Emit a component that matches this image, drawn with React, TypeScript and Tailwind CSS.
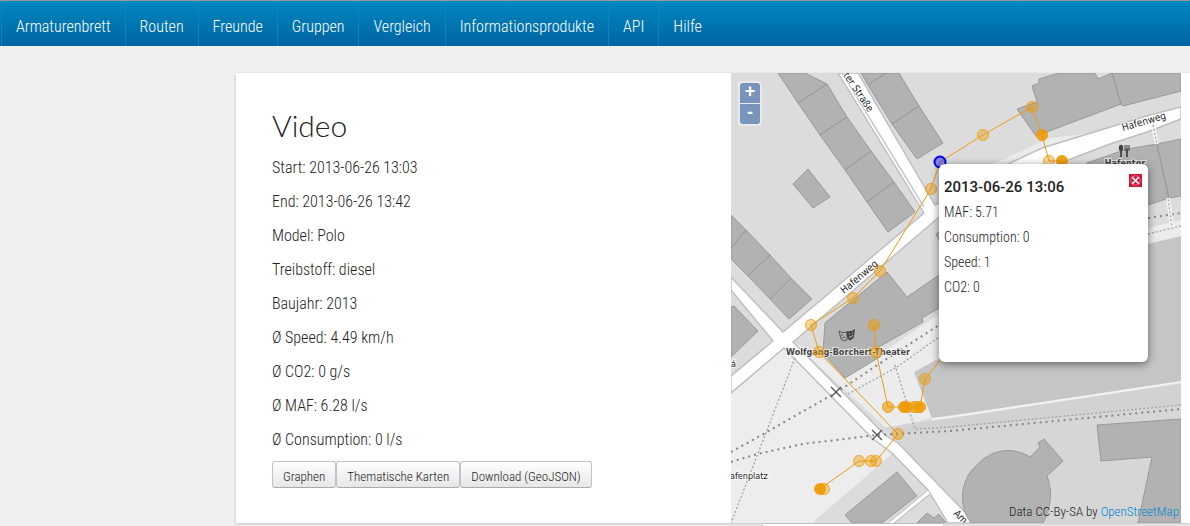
const navItems = [
  "Armaturenbrett",
  "Routen",
  "Freunde",
  "Gruppen",
  "Vergleich",
  "Informationsprodukte",
  "API",
  "Hilfe",
];

const facts = [
  "Start: 2013-06-26 13:03",
  "End: 2013-06-26 13:42",
  "Model: Polo",
  "Treibstoff: diesel",
  "Baujahr: 2013",
  "Ø Speed: 4.49 km/h",
  "Ø CO2: 0 g/s",
  "Ø MAF: 6.28 l/s",
  "Ø Consumption: 0 l/s",
];

const actions = ["Graphen", "Thematische Karten", "Download (GeoJSON)"];

const measurements = ["MAF: 5.71", "Consumption: 0", "Speed: 1", "CO2: 0"];

const trackPoints: [number, number, number][] = [
  [824, 489, 0.4], [820, 489, 0.9], [859, 461, 0.4], [871, 461, 0.4], [876, 461, 0.4],
  [898, 434, 0.4], [819, 352, 0.4], [811, 325, 0.4], [853, 298, 0.4], [880, 271, 0.4],
  [931, 189, 0.4], [983, 135, 0.4], [1032, 107, 0.4], [1042, 135, 0.85], [1049, 161, 0.4],
  [1062, 161, 0.9], [874, 325, 0.5], [876, 352, 0.4], [888, 407, 0.6], [904, 407, 0.9],
  [907, 407, 0.7], [914, 407, 0.5], [917, 407, 0.4], [920, 407, 0.8], [925, 379, 0.4],
];

const buildings = [
  "778,73 805,73 827,84 847,117 871,151 894,182 915,212 888,232 867,202 845,170 820,135 798,103",
  "861,73 868,85 892,124 917,159 943,143 919,106 899,73",
  "793,184 808,169 830,197 813,208",
  "731,215 746,230 770,255 791,278 812,299 789,319 770,299 748,276 731,259",
  "731,307 734,306 758,331 731,357",
  "1017,109 1037,102 1032,86 1039,83 1039,79 1059,73 1095,73 1098,79 1112,73 1181,73 1181,91 1123,106 1121,104 1036,136",
  "1181,139 1157,144 1127,149 1087,163 1087,220 1148,205 1169,198 1181,196",
  "887,272 907,297 939,275 960,262 960,296 922,318 923,322 877,348 883,355 845,378 823,353 825,323",
  "936,234 950,225 950,244 940,242",
  "845,515 897,472 917,496 882,523 852,523",
  "917,523 927,513 934,518 939,514 946,523",
  "1097,425 1181,419 1181,523 1138,523 1152,457 1101,461",
];

function CityMap() {
  return (
    <svg
      viewBox="731 73 450 450"
      className="block w-full font-['DejaVu_Sans_Condensed','DejaVu_Sans',sans-serif] font-normal"
      role="img"
      aria-label="Karte"
    >
      <rect x="731" y="73" width="450" height="450" fill="#dcdcdc" />
      {/* open ground, quay and harbour basin */}
      <path d="M731 393L785 345L893 453L812 523H731Z" fill="#ededed" />
      <path d="M793 342L826 360L845 378L960 300L1148 228L1181 220V236L914 372L932 418L886 428Z" fill="#ececec" />
      <path d="M885 428L1181 384V523H975Z" fill="#d6d6d6" />
      <path d="M885 428L1181 384V404L900 434Z" fill="#d2d2d2" />
      <path d="M914 372L940 358L1148 244L1181 236V382L932 418Z" fill="#c5c5c5" />
      <path d="M932 419L950 417L1181 382" fill="none" stroke="#f3f3f3" strokeWidth="2" />
      <path d="M993 164L1050 138L1110 131L1117 126L1042 150L1010 164Z" fill="#ebebeb" />

      {/* roads */}
      <path
        d="M838 73L924 213L783 332L731 277V290L773 341L731 376V393L784 348L872 438L892 453L928 490L948 523H975L960 507L898 443L885 435L793 342L939 217L1058 164L1107 145L1147 132L1181 119V107L1150 115L1117 125L1042 148L1008 164L935 205L858 73Z"
        fill="#fff"
        stroke="#bdbdbd"
        strokeWidth="1.4"
      />
      <path d="M842 73L924 207" stroke="#c9c9c9" strokeWidth="1.5" />
      <path d="M890 524L928 493" stroke="#bdbdbd" strokeWidth="5" />
      <path d="M890 524L929 492" stroke="#fff" strokeWidth="3" />

      <g fill="#b2b2b2" stroke="#999" strokeWidth="1">
        {buildings.map((points) => (
          <polygon key={points} points={points} />
        ))}
        <path d="M1030 457L1040 447L1038 443L1044 439L1063 461L1047 476C1053 491 1051 508 1043 523H971C958 506 960 480 976 466C991 449 1012 446 1030 457Z" />
      </g>
      <path
        d="M798 103L827 84M820 135L847 117M845 170L871 151M867 202L894 182M868 85L886 73M892 124L919 106M746 230L731 248M770 255L748 276M791 278L770 299M1112 73L1121 104M1157 144L1169 198"
        stroke="#929292"
        fill="none"
      />

      {/* railway and foot paths */}
      <path
        d="M731 452L767 432L837 392L885 360L939 325M731 462L757 454L803 444L877 435L950 431L1181 409M1148 218L1181 213"
        fill="none"
        stroke="#858585"
        strokeWidth="2"
        strokeDasharray="2 4"
      />
      <path
        d="M795 358L731 523M848 394L897 367L939 337M895 365L915 429L950 427L1181 405M1148 234L1181 226"
        fill="none"
        stroke="#a2a2a2"
        strokeWidth="1.3"
        strokeDasharray="2 2"
      />
      <path d="M1153 125L1157 144M1168 198L1172 227" fill="none" stroke="#f4f4f4" strokeWidth="4" />
      <path
        d="M1153 125L1157 144L1168 198L1172 227"
        fill="none"
        stroke="#a2a2a2"
        strokeWidth="1.3"
        strokeDasharray="2 2"
      />
      <path d="M831 387L841 397M841 387L831 397M872 430L882 440M882 430L872 440" stroke="#555" strokeWidth="1.4" />

      {/* labels */}
      <g fill="#1c1c1c" stroke="#fff" strokeWidth="2" strokeOpacity="0.7" paintOrder="stroke" fontSize="10">
        <text transform="translate(844 294) rotate(-40)">Hafenweg</text>
        <text transform="translate(1123 131) rotate(-16)">Hafenweg</text>
        <text transform="translate(843 75) rotate(56)">ter Straße</text>
        <text transform="translate(953 514) rotate(45)">Am</text>
        <text x="730" y="479" fontSize="9">afenplatz</text>
        <text x="731" y="367" fontSize="9">á</text>
        <text x="848" y="355" fontSize="9" textAnchor="middle" fontWeight="bold" fill="#444">
          Wolfgang-Borchert-Theater
        </text>
        <text x="1125" y="166" fontSize="9" textAnchor="middle" fontWeight="bold" fill="#444">
          Hafentor
        </text>
      </g>

      {/* theatre masks */}
      <path d="M839 331Q843 334 847 332L847 340Q843 342 841 339Z" fill="none" stroke="#555" />
      <path d="M841 335H843M842 338L845 337" stroke="#555" />
      <path d="M847 331Q851 332 855 329L854 337Q852 341 849 340Q846 337 847 331Z" fill="#444" />
      <path d="M849 334H850M852 333H853M849 337Q852 338 853 335" stroke="#ddd" fill="none" strokeWidth="0.8" />
      {/* spoon and fork */}
      <ellipse cx="1121" cy="148" rx="2.2" ry="3.2" fill="#444" />
      <path d="M1121 150V157M1127 150V157" stroke="#444" strokeWidth="1.8" />
      <path d="M1125 145V150H1129V145M1127 145V150" stroke="#444" fill="none" strokeWidth="1.1" />

      {/* recorded track */}
      <path
        d="M820 489L859 461H876L898 434L819 352L811 325L853 298L880 271L931 189L940 162L983 135L1032 107L1042 135L1049 161H1062M874 325L876 352L888 407H920L925 379L946 353"
        fill="none"
        stroke="#eb9b17"
      />
      {trackPoints.map(([x, y, opacity], i) => (
        <circle key={i} cx={x} cy={y} r="5.5" fill="#ee9900" fillOpacity={opacity} stroke="#ee9900" strokeOpacity="0.8" />
      ))}
      <circle cx="940" cy="162" r="5.5" fill="#0000ff" fillOpacity="0.4" stroke="#0000ee" strokeWidth="2" />
    </svg>
  );
}

export default function App() {
  return (
    <div className="min-h-screen overflow-hidden bg-[#f0f0f0] font-['Roboto_Condensed',Roboto,sans-serif] font-light text-[#222]">
      <header className="border-t border-[#999] bg-linear-to-b from-[#0088c0] to-[#0064a1]">
        <nav className="flex h-[45px] pl-px">
          {navItems.map((item) => (
            <a
              key={item}
              href="#"
              className="flex items-center border-l border-[#0a86bf] px-[14px] pt-[6px] text-[16px] leading-5 text-white"
            >
              {item}
            </a>
          ))}
        </nav>
      </header>

      <main className="mt-[27px] ml-[236px] flex bg-white pr-[9px] shadow-[0_1px_3px_rgba(0,0,0,0.2)]">
        <section className="flex-1 px-9 pt-[34px]">
          <h1 className="mb-[15px] font-['Lato',sans-serif] text-[30px] leading-9 font-light">Video</h1>
          {facts.map((fact) => (
            <p key={fact} className="mb-[14px] text-[16px] leading-5">
              {fact}
            </p>
          ))}
          <div className="-mt-[3px] flex">
            {actions.map((action) => (
              <button
                key={action}
                type="button"
                className="h-[27px] rounded-[3px] border border-[#c4c4c4] border-b-[#aaa] bg-linear-to-b from-white to-[#e6e6e6] px-[10px] pt-1 text-[13px] leading-5 whitespace-nowrap"
              >
                {action}
              </button>
            ))}
          </div>
        </section>

        <section className="relative w-[450px] shrink-0">
          <CityMap />
          <div className="absolute top-2 left-[7px] flex flex-col gap-px rounded bg-white/40 p-[2px]">
            <button
              type="button"
              aria-label="Zoom in"
              className="h-5 w-5 rounded-t-[3px] bg-[#7994bb] pb-1 font-['Liberation_Sans'] text-[18px] leading-4 font-bold text-white"
            >
              +
            </button>
            <button
              type="button"
              aria-label="Zoom out"
              className="h-5 w-5 rounded-b-[3px] bg-[#7994bb] pb-1 font-['Liberation_Sans'] text-[18px] leading-4 font-bold text-white"
            >
              -
            </button>
          </div>

          <div className="absolute top-[91px] left-[208px] h-[198px] w-[209px] rounded-md bg-white px-[5px] pt-[13px] shadow-[0_2px_8px_rgba(0,0,0,0.5)]">
            <h2 className="mb-[5px] font-[Roboto] text-[15px] leading-5 font-medium">2013-06-26 13:06</h2>
            {measurements.map((line) => (
              <p key={line} className="mb-[5px] text-[14px] leading-5">
                {line}
              </p>
            ))}
            <button type="button" aria-label="Close" className="absolute top-[10px] right-[6px] bg-[#d3173c]">
              <svg viewBox="0 0 13 13" className="block size-[13px]" fill="none" stroke="#fff">
                <circle cx="6.5" cy="6.5" r="4.6" strokeWidth="0.7" strokeDasharray="1 1" />
                <path d="M3 3L10 10M10 3L3 10" strokeWidth="1.6" />
              </svg>
            </button>
          </div>

          <p className="absolute right-[2px] bottom-[1px] text-[13px] leading-5 whitespace-nowrap">
            Data CC-By-SA by{" "}
            <a href="#" className="text-[#0088cc]">
              OpenStreetMap
            </a>
          </p>
        </section>
      </main>

      <div className="mt-px ml-[763px] h-[2px] w-[180px] bg-white shadow-[0_0_3px_rgba(0,0,0,0.3)]" />
    </div>
  );
}
